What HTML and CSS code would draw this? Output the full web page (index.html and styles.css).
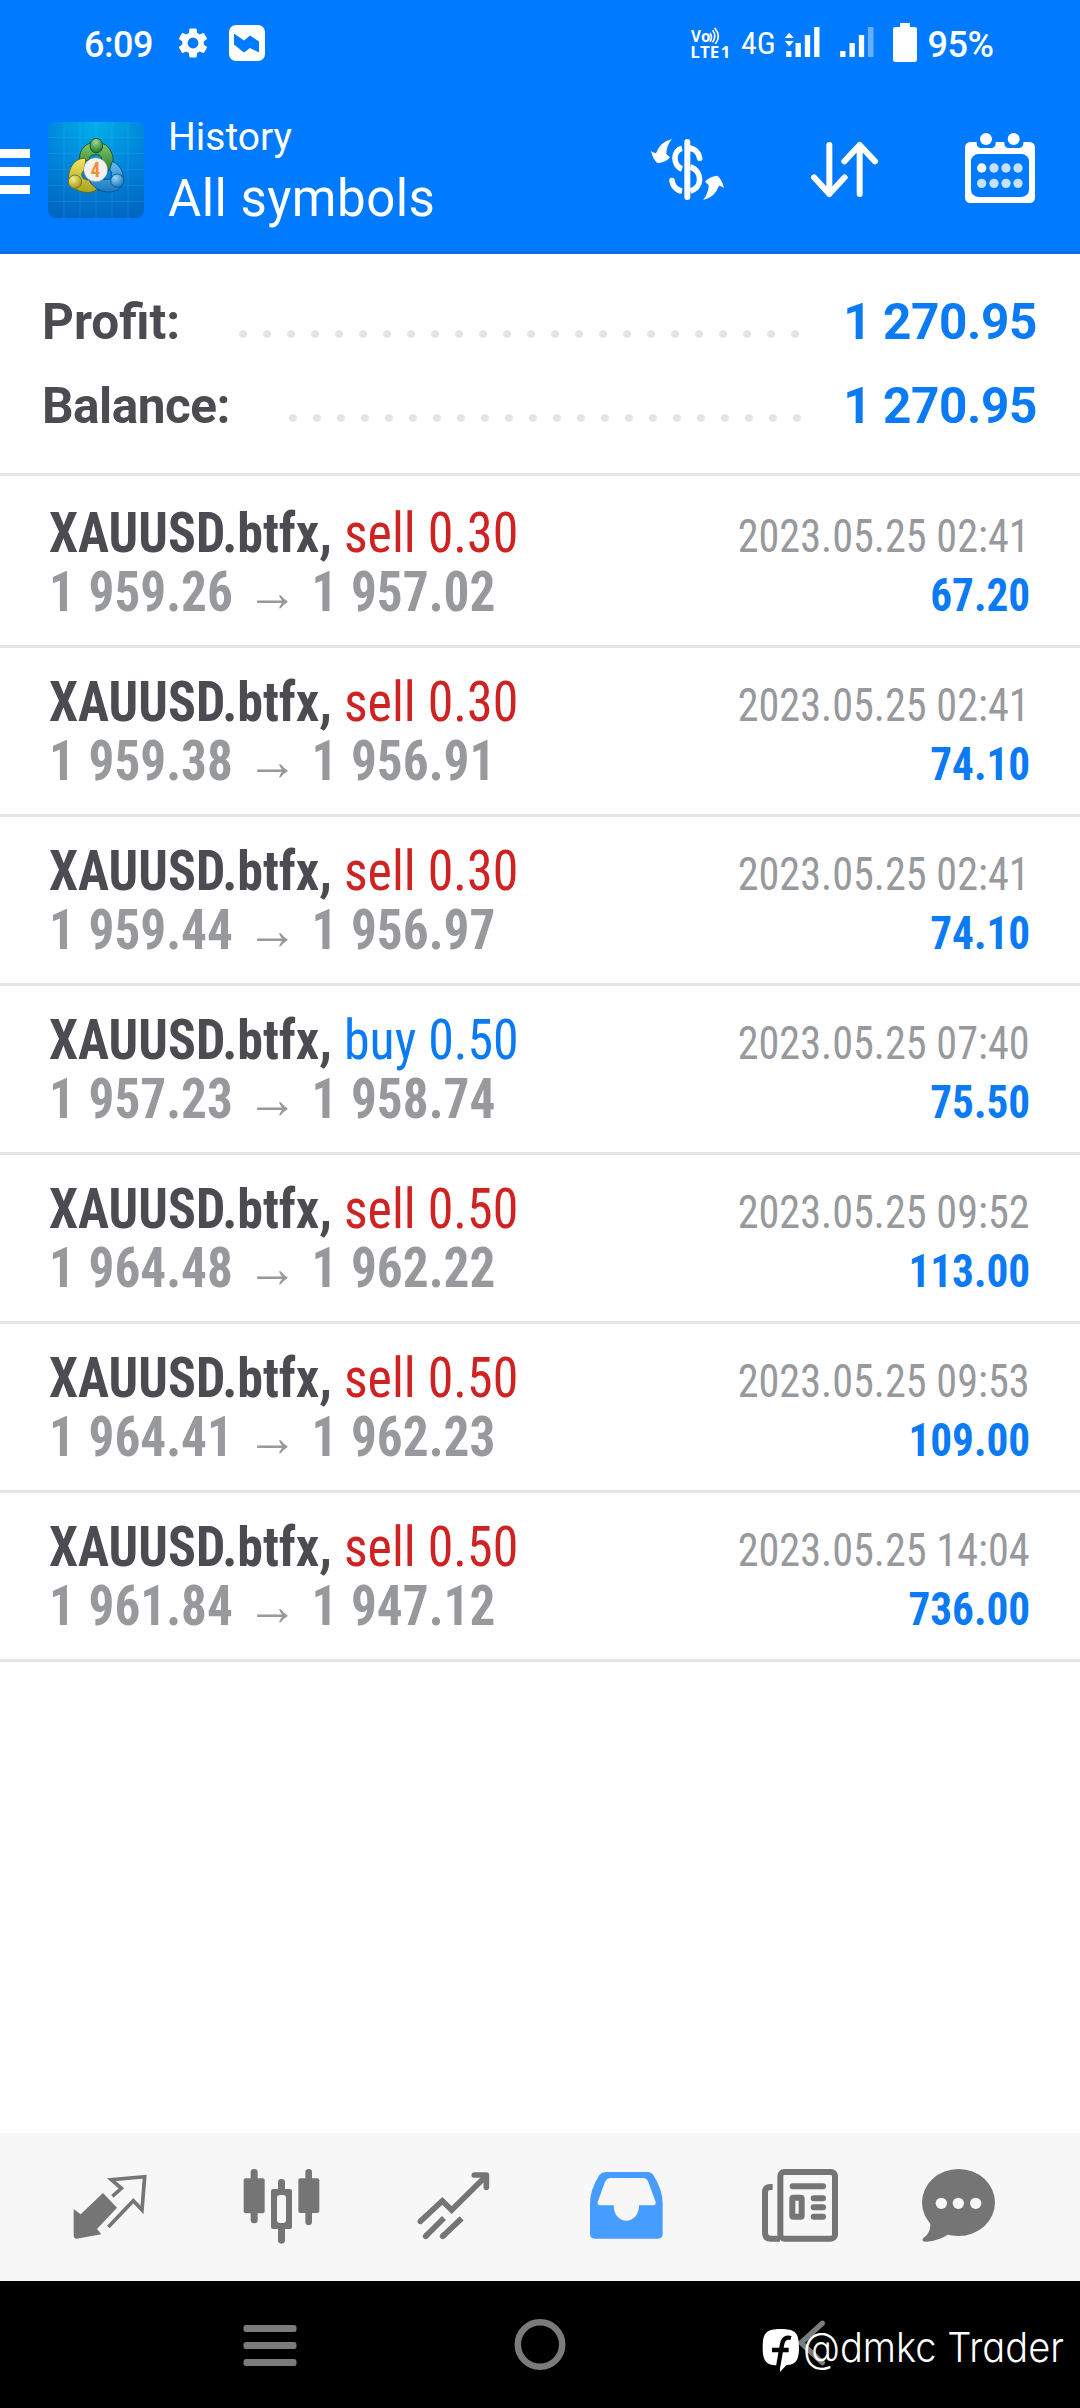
FILE: index.html
```html
<!DOCTYPE html>
<html lang="en">
<head>
<meta charset="utf-8">
<title>History</title>
<link rel="stylesheet" href="styles.css">
</head>
<body>
<div class="screen">
  <header class="top">
    <div class="status">
      <span class="status-text">6:09</span>
      <svg class="gear" viewBox="2 2 20 20" width="30" height="30"><path fill="#fff" d="M19.14 12.94c.04-.3.06-.61.06-.94s-.02-.64-.07-.94l2.03-1.58a.49.49 0 0 0 .12-.61l-1.92-3.32a.49.49 0 0 0-.59-.22l-2.39.96a7 7 0 0 0-1.62-.94l-.36-2.54a.48.48 0 0 0-.48-.41h-3.84a.47.47 0 0 0-.47.41l-.36 2.54c-.59.24-1.13.57-1.62.94l-2.39-.96a.48.48 0 0 0-.59.22L2.74 8.87a.47.47 0 0 0 .12.61l2.03 1.58c-.05.3-.09.63-.09.94s.02.64.07.94l-2.03 1.58a.49.49 0 0 0-.12.61l1.92 3.32c.12.22.37.29.59.22l2.39-.96c.5.38 1.03.7 1.62.94l.36 2.54c.05.24.24.41.48.41h3.84c.24 0 .44-.17.47-.41l.36-2.54a7 7 0 0 0 1.62-.94l2.39.96c.22.08.47 0 .59-.22l1.92-3.32a.47.47 0 0 0-.12-.61zM12 15.6a3.6 3.6 0 1 1 0-7.2 3.6 3.6 0 0 1 0 7.2z"/></svg>
      <svg class="msg" viewBox="0 0 36 36" width="36" height="36"><rect width="36" height="36" rx="7" fill="#fff"/><path fill="#007aff" d="M5 8.500L15 15.500L21 10.500L30 16.500V27.500L21 23L15 27.500L5 19.500Z"/></svg>
      <svg class="volte" viewBox="60 36 120 123" width="40" height="41" fill="#fff">
        <text x="63" y="96" class="volte-text" textLength="58" lengthAdjust="spacingAndGlyphs">Vo</text>
        <path d="M120 69Q129 82 120 95M128 61Q141 79 128 97M134 54Q155 78 136 101" fill="none" stroke="#fff" stroke-width="5"/>
        <text x="61" y="143" class="volte-text lte" textLength="87" lengthAdjust="spacingAndGlyphs">LTE</text>
        <text x="152" y="143" class="volte-text lte">1</text>
      </svg>
      <span class="net">4G</span>
      <svg class="signal" viewBox="340 36 110 123" width="37" height="41" fill="#fff"><path d="M342 84L355 68L369 84ZM342 93H369L355 109ZM346 123h16v18h-16zM374 99h16v42h-16zM402 75h16v66h-16zM430 51h16v90h-16z"/></svg>
      <svg class="signal2" viewBox="505 36 110 123" width="37" height="41" fill="#fff"><path d="M508 123h16v18h-16zM536 99h16v42h-16zM564 75h16v66h-16z"/><path opacity=".4" d="M591 51h17v90h-17z"/></svg>
      <svg class="battery" viewBox="663 36 78 123" width="26" height="41" fill="#fff"><path d="M687 39H717V51H731Q738 51 738 58V149Q738 156 731 156H673Q666 156 666 149V58Q666 51 673 51H687Z"/></svg>
      <span class="status-text">95%</span>
    </div>
    <div class="appbar">
      <div class="menu"><i></i><i></i><i></i></div>
      <svg class="logo" viewBox="55 36 288 288" width="96" height="96">
        <defs>
          <radialGradient id="bg" cx=".5" cy="0" r="1"><stop offset="0" stop-color="#00b0ea"/><stop offset=".5" stop-color="#0088dc"/><stop offset="1" stop-color="#0068c4"/></radialGradient>
          <linearGradient id="gr" x1="0" y1="0" x2="0" y2="1"><stop offset="0" stop-color="#8cc96a"/><stop offset="1" stop-color="#227a2c"/></linearGradient>
          <linearGradient id="ye" x1="0" y1="0" x2="0" y2="1"><stop offset="0" stop-color="#f1e463"/><stop offset="1" stop-color="#aaa31c"/></linearGradient>
          <linearGradient id="bl" x1="0" y1="0" x2="0" y2="1"><stop offset="0" stop-color="#68bdec"/><stop offset="1" stop-color="#1878c0"/></linearGradient>
          <radialGradient id="gb" cx=".45" cy=".25" r=".7"><stop offset="0" stop-color="#a5db93"/><stop offset="1" stop-color="#1e7b2c"/></radialGradient>
          <radialGradient id="yb" cx=".35" cy=".3" r=".7"><stop offset="0" stop-color="#f6ef8e"/><stop offset="1" stop-color="#a89d17"/></radialGradient>
          <radialGradient id="bb" cx=".35" cy=".3" r=".7"><stop offset="0" stop-color="#9ed8f8"/><stop offset="1" stop-color="#1b78bd"/></radialGradient>
        </defs>
        <rect x="55" y="36" width="288" height="288" rx="24" fill="url(#bg)"/>
        <path d="M103 36V324M151 36V324M199 36V324M247 36V324M295 36V324M55 82H343M55 130H343M55 178H343M55 226H343M55 274H343" stroke="#7fd0ff" stroke-opacity=".22" stroke-width="2"/>
        <g stroke-linejoin="round" stroke-width="3">
          <path d="M150 158C144 122 168 96 199 96C234 96 258 132 248 165Q242 182 226 187L214 160Q222 134 199 134Q178 134 178 150Z" fill="url(#gr)" stroke="#0f5a35"/>
          <path d="M168 145C138 142 115 172 117 208C120 234 150 250 182 247Q202 244 210 228L188 208Q172 214 160 205Q150 190 166 178Z" fill="url(#ye)" stroke="#5b6a20"/>
          <path d="M248 154C276 166 288 198 276 226C260 254 218 250 196 232Q180 220 178 206L205 200Q220 212 240 208Q252 194 240 178Z" fill="url(#bl)" stroke="#0d4f8e"/>
          <ellipse cx="200" cy="107" rx="19" ry="22" fill="url(#gb)" stroke="#0f5a35"/>
          <circle cx="136" cy="215" r="20" fill="url(#yb)" stroke="#7a7420"/>
          <circle cx="263" cy="212" r="20" fill="url(#bb)" stroke="#0d5c9e"/>
        </g>
        <circle cx="198" cy="179" r="36" fill="#f2f0f0" stroke="#777" stroke-width="1.500"/>
        <text x="197" y="200" class="logo-num" text-anchor="middle">4</text>
      </svg>
      <div class="titles"><div class="sub">History</div><div class="title">All symbols</div></div>
      <svg class="act-dollar" viewBox="30 21 225 216" width="75" height="72">
        <g fill="none" stroke="#fff" stroke-width="17"><path d="M126 70C98 77 98 122 126 132M151 126C188 137 188 188 151 198"/><path stroke-linecap="round" d="M179 100Q174 74 151 70M96 167Q99 189 118 196"/><path d="M112 193Q118 197 126 198M151 70L158 72"/></g>
        <rect x="133" y="42" width="18" height="183" rx="9" fill="#fff"/>
        <path id="swirl" fill="#fff" d="M96 42C84 56 79 72 79 87L90 97Q78 112 53 115Q39 104 33 78Q40 84 48 85Q60 50 96 42Z"/>
        <use href="#swirl" transform="rotate(180 142.5 133.5)"/>
      </svg>
      <svg class="act-sort" viewBox="510 21 207 216" width="69" height="72" fill="none" stroke="#fff" stroke-width="18" stroke-linecap="round" stroke-linejoin="round"><path d="M568 60V207M522 157L568 207L614 157M659 207V60M613 109L659 60L705 109"/></svg>
      <svg class="act-cal" viewBox="975 21 210 216" width="70" height="72">
        <rect x="975" y="51" width="210" height="183" rx="16" fill="#fff"/>
        <g fill="#007aff"><rect x="993" y="87" width="174" height="129" rx="22"/><path d="M1010 45H1067V55Q1067 69 1053 69H1024Q1010 69 1010 55ZM1093 45H1150V55Q1150 69 1136 69H1107Q1093 69 1093 55Z"/></g>
        <g fill="#fff"><circle cx="1038" cy="42" r="18"/><circle cx="1121" cy="42" r="18"/><circle cx="1025" cy="129" r="14"/></g>
        <g fill="#c5e1ff"><circle cx="1062" cy="129" r="14"/><circle cx="1098" cy="129" r="14"/><circle cx="1134" cy="129" r="14"/><circle cx="1025" cy="175" r="14"/><circle cx="1062" cy="175" r="14"/><circle cx="1098" cy="175" r="14"/><circle cx="1134" cy="175" r="14"/></g>
      </svg>
    </div>
  </header>

  <section class="summary">
    <div class="sum-row"><span class="label">Profit:</span><span class="dots d24"></span><span class="value">1 270.95</span></div>
    <div class="sum-row"><span class="label tight">Balance:</span><span class="dots d22"></span><span class="value">1 270.95</span></div>
  </section>

  <main class="trades">
    <article class="trade"><div class="line"><span class="deal"><b>XAUUSD.btfx,</b> <span class="sell">sell 0.30</span></span><span class="date">2023.05.25 02:41</span></div><div class="line"><span class="prices">1 959.26 → 1 957.02</span><span class="gain">67.20</span></div></article>
    <article class="trade"><div class="line"><span class="deal"><b>XAUUSD.btfx,</b> <span class="sell">sell 0.30</span></span><span class="date">2023.05.25 02:41</span></div><div class="line"><span class="prices">1 959.38 → 1 956.91</span><span class="gain">74.10</span></div></article>
    <article class="trade"><div class="line"><span class="deal"><b>XAUUSD.btfx,</b> <span class="sell">sell 0.30</span></span><span class="date">2023.05.25 02:41</span></div><div class="line"><span class="prices">1 959.44 → 1 956.97</span><span class="gain">74.10</span></div></article>
    <article class="trade"><div class="line"><span class="deal"><b>XAUUSD.btfx,</b> <span class="buy">buy 0.50</span></span><span class="date">2023.05.25 07:40</span></div><div class="line"><span class="prices">1 957.23 → 1 958.74</span><span class="gain">75.50</span></div></article>
    <article class="trade"><div class="line"><span class="deal"><b>XAUUSD.btfx,</b> <span class="sell">sell 0.50</span></span><span class="date">2023.05.25 09:52</span></div><div class="line"><span class="prices">1 964.48 → 1 962.22</span><span class="gain">113.00</span></div></article>
    <article class="trade"><div class="line"><span class="deal"><b>XAUUSD.btfx,</b> <span class="sell">sell 0.50</span></span><span class="date">2023.05.25 09:53</span></div><div class="line"><span class="prices">1 964.41 → 1 962.23</span><span class="gain">109.00</span></div></article>
    <article class="trade"><div class="line"><span class="deal"><b>XAUUSD.btfx,</b> <span class="sell">sell 0.50</span></span><span class="date">2023.05.25 14:04</span></div><div class="line"><span class="prices">1 961.84 → 1 947.12</span><span class="gain">736.00</span></div></article>
  </main>

  <nav class="tabs">
    <a class="tab"><svg viewBox="15 0 270 270" width="90" height="90"><path fill="#757575" d="M41 147L62 163L129 99L171 143L111 207L124 223L50 236Q41 235 41 227Z"/><path fill="none" stroke="#757575" stroke-width="11" d="M157 109L184 85L154 59L254 50L246 150L220 122L145 201"/></svg></a>
    <a class="tab"><svg viewBox="531 0 270 270" width="90" height="90" fill="#757575"><rect x="551" y="55" width="63" height="105" rx="6"/><rect x="572" y="27" width="21" height="163" rx="10"/><rect x="715" y="55" width="63" height="104" rx="6"/><rect x="736" y="27" width="20" height="168" rx="10"/><rect x="654" y="57" width="21" height="60" rx="10"/><rect x="654" y="190" width="21" height="61" rx="10"/><rect x="633" y="87" width="63" height="120" rx="6"/><rect x="651" y="105" width="27" height="84" rx="9" fill="#f7f7f7"/></svg></a>
    <a class="tab"><svg viewBox="1047 0 270 270" width="90" height="90" fill="none" stroke="#757575" stroke-width="17"><path stroke-linecap="round" stroke-linejoin="round" d="M1243 45H1279V82"/><path stroke-linecap="round" d="M1081 184L1147 123L1175 150L1276 50M1097 229L1100 226M1148 229L1151 226"/><path d="M1097 229L1152 174M1148 229L1205 175"/></svg></a>
    <a class="tab"><svg viewBox="3 0 270 270" width="90" height="90"><path fill="#469dff" fill-rule="evenodd" d="M78 36H202Q214 36 220 45Q248 90 248 130V222Q248 236 234 236H44Q30 236 30 222V130Q30 90 58 45Q66 36 78 36ZM92 54H188Q200 54 205 66L227 126Q228 136 219 136H177C177 198 101 198 101 136H61Q51 136 53 126L75 66Q80 54 92 54Z"/></svg></a>
    <a class="tab"><svg viewBox="519 0 270 270" width="90" height="90" fill="none" stroke="#757575" stroke-width="18"><rect x="601" y="36" width="164" height="200" rx="12"/><path d="M578 81H571Q555 81 555 97V218Q555 236 573 236H600"/><path stroke-linecap="round" d="M638 79H729M701 115H729M701 142H729M701 170H729"/><rect x="637" y="113.500" width="28" height="57" rx="3"/></svg></a>
    <a class="tab"><svg viewBox="1035 0 270 270" width="90" height="90" fill="#757575"><ellipse cx="1135.500" cy="127.500" rx="109.500" ry="100.500"/><path d="M1050 182Q1056 216 1030 234Q1022 246 1040 245Q1075 243 1108 221Z"/><g fill="#f7f7f7"><circle cx="1084" cy="130" r="17"/><circle cx="1135" cy="130" r="17"/><circle cx="1187" cy="130" r="17"/></g></svg></a>
  </nav>

  <footer class="sysnav">
    <svg viewBox="0 0 60 60" width="60" height="60" fill="#7b7b7b"><rect x="3.500" y="11" width="53" height="7" rx="2.500"/><rect x="3.500" y="28" width="53" height="7" rx="2.500"/><rect x="3.500" y="45" width="53" height="7" rx="2.500"/></svg>
    <svg viewBox="0 0 60 60" width="60" height="60"><circle cx="30" cy="30.500" r="22.200" fill="none" stroke="#7b7b7b" stroke-width="6.500"/></svg>
    <svg viewBox="90 12 180 180" width="60" height="60"><path d="M217 40L153 98L217 158" fill="none" stroke="#7b7b7b" stroke-width="16" stroke-linecap="round"/></svg>
    <div class="watermark">
      <svg viewBox="36 51 114 138" width="38" height="46"><path fill="#fff" d="M92 57C136 57 147 68 147 112C147 152 138 164 108 166L90 185V167C48 167 38 154 38 112C38 68 50 57 92 57Z"/><path fill="none" stroke="#000" stroke-width="13" d="M123 84Q100 78 96 104L84 172M66 120H116"/><path fill="#fff" d="M90 185L94 162H112Z"/></svg>
      <span>@dmkc Trader</span>
    </div>
  </footer>
</div>
</body>
</html>
```
FILE: styles.css
```css
* { box-sizing: border-box; }
body { margin: 0; background: #fff; font-family: Roboto, "Liberation Sans", sans-serif; }
svg { display: block; flex: none; overflow: visible; }
.screen { width: 1080px; height: 2408px; display: flex; flex-direction: column; overflow: hidden; }

.top { height: 254px; background: #007aff; border-bottom: 3px solid #0f6edb; color: #fff; }
.status { height: 85px; display: flex; align-items: center; padding-left: 84px; white-space: nowrap; }
.status-text { font-size: 36px; font-weight: 500; padding-top: 5px; letter-spacing: -.5px; }
.gear { margin-left: 25px; }
.msg { margin-left: 21px; }
.volte { margin-left: 425px; }
.volte-text { font: 700 46px "Open Sans", sans-serif; }
.lte { font-size: 50px; }
.net { font: 32px "Roboto Condensed", Roboto, sans-serif; margin-left: 11px; }
.signal { margin-left: 8px; }
.signal2 { margin-left: 18px; }
.battery { margin-left: 16px; }
.battery + .status-text { margin-left: 10px; }

.appbar { display: flex; }
.menu { width: 30px; padding-top: 64px; display: flex; flex-direction: column; gap: 9px; }
.menu i { height: 9px; background: #fff; }
.logo { margin: 37px 0 0 18px; }
.logo-num { font: 700 58px "Roboto Condensed", Roboto, sans-serif; fill: #f09035; }
.titles { flex: none; padding: 29px 0 0 24px; width: 506px; white-space: nowrap; }
.sub { font-size: 39px; line-height: 46px; }
.title { font-size: 51px; line-height: 60px; margin-top: 9px; letter-spacing: .45px; }
.act-dollar { margin-top: 47px; }
.act-sort { margin: 47px 0 0 85px; }
.act-cal { margin: 47px 0 0 86px; }

.summary { height: 222px; padding: 26px 43px 0 42px; border-bottom: 3px solid #e4e4e4; }
.sum-row { display: flex; align-items: center; height: 84px; font-size: 49.5px; font-weight: 700; line-height: 84px; }
.label { color: #4c4b51; }
.tight { letter-spacing: -.5px; }
.value { margin-left: auto; color: #0a7af5; letter-spacing: -.4px; }
.dots { height: 8px; margin: 24px 0 0 51px; background: radial-gradient(circle at 12px 4px, #e4e4e4 3.6px, transparent 4.3px) 0 0 / 24px 8px repeat-x; }
.d24 { width: 576px; }
.d22 { width: 528px; }

.trades { flex: 1; padding-top: 3px; }
.trade { height: 169px; padding: 25px 50px 0 49px; border-bottom: 3px solid #e4e4e4; font-family: "Roboto Condensed", Roboto, sans-serif; }
.line { display: flex; justify-content: space-between; align-items: baseline; height: 59px; line-height: 59px; white-space: nowrap; }
.deal, .prices { font-size: 56px; transform-origin: left; }
.deal { color: #4c4b51; transform: scaleX(.927); }
.sell { color: #cf2222; }
.buy { color: #0a7af5; }
.prices { color: #98999d; font-weight: 700; word-spacing: 2px; transform: scaleX(.915); }
.date, .gain { font-size: 45.5px; transform-origin: right; }
.date { color: #98999d; transform: scaleX(.928); }
.gain { font-weight: 700; color: #0a7af5; transform: scaleX(.95); }

.tabs { height: 148px; padding: 27px 24px 0; background: #f7f7f7; display: flex; }
.tab { width: 172px; display: flex; justify-content: center; }

.sysnav { position: relative; height: 127px; padding: 33px 240px 0; background: #000; display: flex; justify-content: space-between; }
.watermark { position: absolute; left: 762px; top: 46px; width: 310px; display: flex; color: #fff; font: 350 41px/40px Inter, sans-serif; font-feature-settings: "cv11"; white-space: nowrap; }
.watermark span { margin-left: 3px; transform: scaleX(.928); transform-origin: left; }
```
